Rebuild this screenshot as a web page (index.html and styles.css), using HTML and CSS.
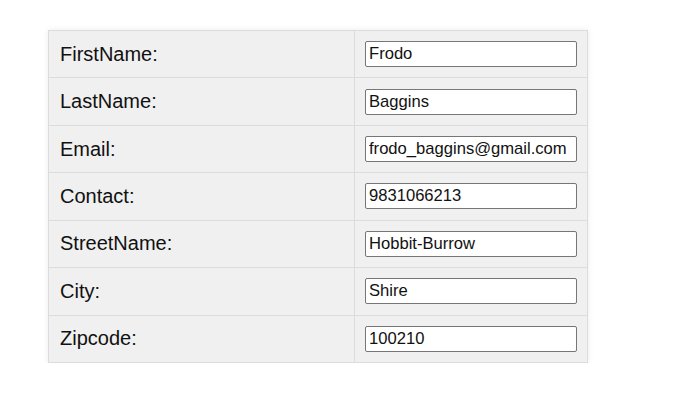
FILE: index.html
```html
<!DOCTYPE html>
<html>
<head>
<meta charset="utf-8">
<link rel="stylesheet" href="styles.css">
</head>
<body>
<div class="wrap">
<table class="form-table">
  <tr><td class="label">FirstName:</td><td class="field"><input type="text" value="Frodo"></td></tr>
  <tr><td class="label">LastName:</td><td class="field"><input type="text" value="Baggins"></td></tr>
  <tr><td class="label">Email:</td><td class="field"><input type="text" value="frodo_baggins@gmail.com"></td></tr>
  <tr><td class="label">Contact:</td><td class="field"><input type="text" value="9831066213"></td></tr>
  <tr><td class="label">StreetName:</td><td class="field"><input type="text" value="Hobbit-Burrow"></td></tr>
  <tr><td class="label">City:</td><td class="field"><input type="text" value="Shire"></td></tr>
  <tr><td class="label">Zipcode:</td><td class="field"><input type="text" value="100210"></td></tr>
</table>
</div>
</body>
</html>
```
FILE: styles.css
```css
html, body {
  margin: 0;
  padding: 0;
  background: #ffffff;
  font-family: "Liberation Sans", Arial, sans-serif;
}
.wrap {
  padding: 30px 0 0 48px;
}
.form-table {
  border-collapse: collapse;
  background: #f0f0f0;
  box-shadow: 0 0 6px rgba(0, 0, 0, 0.08);
  width: 540px;
  height: 332px;
}
.form-table td {
  border: 1px solid #dcdcdc;
  padding: 0;
  height: 46.43px;
}
.label {
  width: 294px;
  padding-left: 11px !important;
  font-size: 20px;
  color: #111;
}
.field {
  padding: 0 10px !important;
}
.field input {
  display: block;
  box-sizing: border-box;
  width: 212px;
  height: 26px;
  margin: 0;
  padding: 0 3px;
  border: 1px solid #767676;
  border-radius: 2px;
  background: #fff;
  font-family: "Liberation Sans", Arial, sans-serif;
  font-size: 16.6px;
  color: #111;
}
```
